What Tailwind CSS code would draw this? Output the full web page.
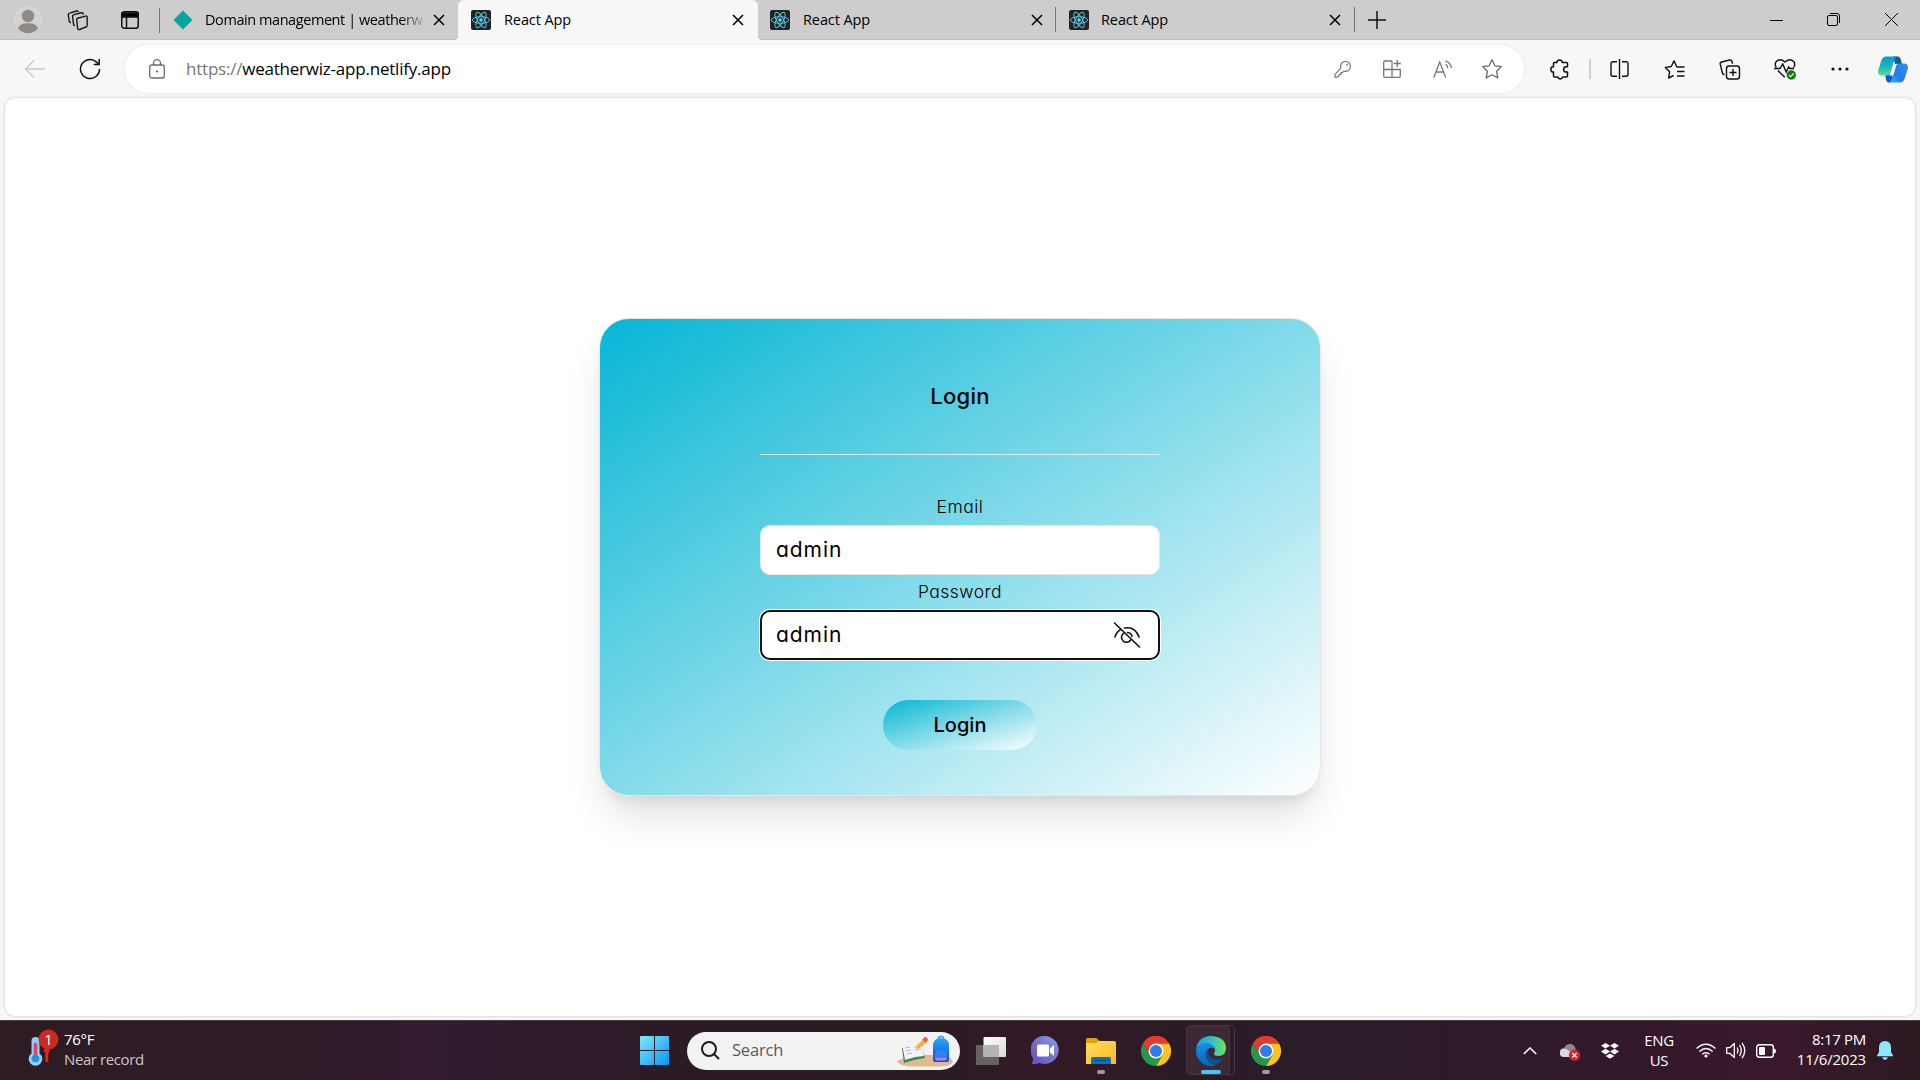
<!DOCTYPE html>
<html lang="en">
<head>
<meta charset="utf-8">
<title>React App</title>
<script src="https://cdn.jsdelivr.net/npm/@tailwindcss/browser@4"></script>
</head>
<body class="w-[1920px] h-[1080px] overflow-hidden flex flex-col bg-[#f7f7f7] text-black font-['Open_Sans','Noto_Sans',sans-serif]">

<svg class="hidden">
  <defs>
    <symbol id="x" viewBox="0 0 12 12"><path d="M1 1l10 10M11 1L1 11" stroke="currentColor" stroke-width="1.5" fill="none"/></symbol>
    <symbol id="react" viewBox="0 0 20 20">
      <rect width="20" height="20" rx="2" fill="#222"/>
      <g fill="none" stroke="#58c4dc" stroke-width="1">
        <ellipse cx="10" cy="10" rx="8.6" ry="3.3"/>
        <ellipse cx="10" cy="10" rx="8.6" ry="3.3" transform="rotate(60 10 10)"/>
        <ellipse cx="10" cy="10" rx="8.6" ry="3.3" transform="rotate(120 10 10)"/>
      </g>
      <circle cx="10" cy="10" r="1.8" fill="#61dafb"/>
    </symbol>
    <symbol id="chrome" viewBox="0 0 48 48">
      <path d="M24 24L3.2 12A24 24 0 0 1 44.8 12z" fill="#e33b2e"/>
      <path d="M44.8 12A24 24 0 0 1 24 48L34.4 30 24 12z" fill="#fcc31e"/>
      <path d="M3.2 12A24 24 0 0 0 24 48L34.4 30H13.6z" fill="#279847"/>
      <path d="M24 12h20.8A24 24 0 0 0 3.2 12L13.6 30z" fill="#e33b2e"/>
      <circle cx="24" cy="24" r="12" fill="#fff"/>
      <circle cx="24" cy="24" r="9.6" fill="#2f7bea"/>
    </symbol>
  </defs>
</svg>

<!-- Tab strip -->
<header class="h-[39px] shrink-0 flex bg-[#cdcdcd]">
  <div class="w-[160px] pl-[14px] flex items-center border-r border-transparent">
    <svg class="size-7 mt-px" viewBox="0 0 28 28"><circle cx="14" cy="14" r="13.5" fill="#d4d1ce" stroke="#dedbd7"/><circle cx="14" cy="10" r="6.2" fill="#8f8a87"/><path d="M4 22.5c1.500-4.500 5.500-5.300 10-5.300s8.500.8 10 5.300A13 13 0 0 1 4 22.500z" fill="#8f8a87"/></svg>
    <svg class="ml-[24px] w-[24px] h-[22px]" viewBox="0 0 24 22" fill="none" stroke="#1a1a1a" stroke-width="1.4" stroke-linejoin="round"><path d="M11.500 9.200l8.200-2.100q1.500-.3 1.500 1.200v8q0 1.300-1.200 1.700l-6.500 2.500q-1.700.5-1.900-1.100l-.8-8.200q-.1-1.600.7-2z"/><path d="M9 16.500q-1.300.2-1.500-1.300l-.9-7.500q-.1-1.700 1.300-2.100l7.500-1.900q1.500-.3 1.700 1v1"/><path d="M5 13.500q-1.500.2-1.700-1.200l-1-6q-.2-1.800 1.300-2.200L10.500 2q1.600-.4 1.900 1"/></svg>
    <svg class="ml-[30px] size-[20px]" viewBox="0 0 20 20" fill="none" stroke="#111" stroke-width="1.5"><rect x="1.800" y="1.800" width="16.400" height="16.400" rx="2.500"/><path d="M2 3h16v4H2z" fill="#000"/><path d="M6.500 7v11"/></svg>
  </div>
  <div class="w-[298px] pl-[13px] flex items-center relative">
    <i class="absolute left-[-1px] top-2 w-px h-[25px] bg-[#777]"></i>
    <svg class="size-5" viewBox="0 0 20 20"><path d="M10 0.500L19.500 10 10 19.500.5 10z" fill="#05a5a0"/></svg>
    <span class="ml-3 w-[219px] whitespace-nowrap text-[14.5px] tracking-[-0.43px] bg-[linear-gradient(90deg,#000_192px,#000000_195px,#00000022_219px)] bg-clip-text text-transparent">Domain management | weatherw</span>
    <svg class="ml-[9px] size-3 mt-px"><use href="#x"/></svg>
  </div>
  <div class="w-[300px] pl-[13px] flex items-center rounded-t-[6px] bg-[#f7f7f7]">
    <svg class="size-5"><use href="#react"/></svg>
    <span class="ml-[13px] w-[228px] text-[14.5px] tracking-[-0.1px]">React App</span>
    <svg class="size-3 mt-px"><use href="#x"/></svg>
  </div>
  <div class="w-[297px] pl-3 flex items-center">
    <svg class="size-5"><use href="#react"/></svg>
    <span class="ml-[13px] w-[228px] text-[14.5px] tracking-[-0.1px]">React App</span>
    <svg class="size-3 mt-px"><use href="#x"/></svg>
  </div>
  <div class="w-[299px] flex items-center">
    <i class="w-px h-[25px] bg-[#777]"></i>
    <svg class="size-5 ml-[13px]"><use href="#react"/></svg>
    <span class="ml-[12px] w-[228px] text-[14.5px] tracking-[-0.1px]">React App</span>
    <svg class="size-3 mt-px"><use href="#x"/></svg>
  </div>
  <div class="flex items-center">
    <i class="w-px h-[25px] bg-[#777]"></i>
    <svg class="ml-[13px] size-[18px]" viewBox="0 0 18 18" stroke="#111" stroke-width="1.500"><path d="M9 0v18M0 9h18"/></svg>
  </div>
  <div class="ml-auto w-[173px] flex items-center pl-[23px]">
    <svg class="w-[13px] h-3" viewBox="0 0 13 12"><path d="M0 6.500h13" stroke="#000"/></svg>
    <svg class="ml-[44px] size-[13px]" viewBox="0 0 13 13" fill="none" stroke="#000"><rect x=".5" y="2.500" width="10" height="10" rx="1.500"/><path d="M3 .5h7a2.500 2.500 0 0 1 2.500 2.500v7"/></svg>
    <svg class="ml-[45px] size-[13px]" viewBox="0 0 13 13" stroke="#000"><path d="M0 0l13 13M13 0L0 13"/></svg>
  </div>
</header>
<!-- Strip edge, open under the active tab -->
<div class="h-px shrink-0 flex"><i class="w-[456px] bg-[#bdbdbd]"></i><i class="w-[304px]"></i><i class="grow bg-[#bdbdbd]"></i></div>

<!-- Toolbar -->
<nav class="h-[57px] shrink-0 flex items-center pl-[24px] pt-px">
  <svg class="size-[22px]" viewBox="0 0 22 22" fill="none" stroke="#c9c9c9" stroke-width="1.300"><path d="M21 11H2M10 2.500L1.500 11l8.500 8.500"/></svg>
  <svg class="ml-[33px] size-[22px]" viewBox="0 0 22 22" fill="none" stroke="#111" stroke-width="1.500"><path d="M20.500 11a9.500 9.500 0 1 1-3-6.900l2.500 2.200"/><path d="M20.200 1v5.500h-5.500"/></svg>
  <div class="ml-[24px] w-[1399px] h-[48px] rounded-full bg-white flex items-center shadow-[0_0_4px_rgba(0,0,0,.06)]">
    <svg class="ml-[24px] w-4 h-5" viewBox="0 0 16 20" fill="none" stroke="#6b6b6b" stroke-width="1.300"><rect x=".7" y="6" width="14.600" height="13" rx="2"/><path d="M4.500 6V4.200a3.500 3.500 0 0 1 7 0V6"/><circle cx="8" cy="12.500" r="1" fill="#555" stroke="none"/></svg>
    <span class="ml-[21px] w-[1148px] text-[17px] tracking-[-0.22px]"><span class="text-[#767676]">https://</span>weatherwiz-app.netlify.app</span>
    <svg class="size-[18px]" viewBox="0 0 18 18" fill="none" stroke="#767676" stroke-width="1.200"><path d="M6.800 8.200A5 5 0 1 1 10 11.200l-1.500 1.300H7v2H5l-.3 2-1.200.7H1v-2.800z"/><circle cx="13" cy="5" r=".9" fill="#767676" stroke="none"/></svg>
    <svg class="ml-[31px] size-[18px]" viewBox="0 0 18 18" fill="none" stroke="#767676" stroke-width="1.300"><path d="M9 1H2a1.300 1.300 0 0 0-1.300 1.300V16A1.300 1.300 0 0 0 2 17.300h14a1.300 1.300 0 0 0 1.300-1.300v-6.500H.7M9 1v16.300M14.300 0v7M10.800 3.500h7"/></svg>
    <svg class="ml-[32px] w-[20px] h-[18px]" viewBox="0 0 20 18" fill="none" stroke="#767676" stroke-width="1.300"><path d="M.8 17.500L6.700 2l6 15.500M3 12h7.500M12.500 4q2 1.200 2.200 4M12.500.8q5.200 2 6 7.200" /></svg>
    <svg class="ml-[28px] size-[22px]" viewBox="0 0 22 22" fill="none" stroke="#6b6b6b" stroke-width="1.300" stroke-linejoin="round"><path d="M11 1.800l2.900 6 6.400.9-4.700 4.600 1.200 6.600L11 16.800l-5.800 3.100 1.200-6.600L1.700 8.700l6.400-.9z"/></svg>
  </div>
  <svg class="ml-[26px] w-[19px] h-[21px]" viewBox="0 0 19 21" fill="none" stroke="#111" stroke-width="1.500" stroke-linejoin="round"><path d="M4 3.500h3a2.600 2.600 0 0 1 5.200 0h4.300q1 0 1 1v3.200h-1.200a2.700 2.700 0 0 0 0 5.400h1.200v3.900q0 1-1 1h-3.800a2.600 2.600 0 0 1-5 0H4.500q-1 0-1-1v-3.900a2.700 2.700 0 0 1 0-5.400V4z"/></svg>
  <i class="ml-[20px] w-[2px] h-5 bg-[#cfcfcf]"></i>
  <svg class="ml-[19px] w-[19px] h-5" viewBox="0 0 19 20" fill="none" stroke="#111" stroke-width="1.400"><path d="M7 2.700H3a2 2 0 0 0-2 2v10.600a2 2 0 0 0 2 2h4M12 2.700h4a2 2 0 0 1 2 2v10.600a2 2 0 0 1-2 2h-4M9.500 0v20"/></svg>
  <svg class="ml-[35px] size-[21px]" viewBox="0 0 21 21" fill="none" stroke="#111" stroke-width="1.400" stroke-linejoin="round"><path d="M14 8l-1.300-.2L10 1.800 7.300 7.500l-6 .9 4.300 4.400L4.600 19l5-2.500M13 8h7.500M13 12.500h7.500M13 17h7.500"/></svg>
  <svg class="ml-[34px] w-[22px] h-[21px]" viewBox="0 0 22 21" fill="none" stroke="#111" stroke-width="1.400"><rect x="7.500" y="7" width="13" height="13" rx="2.500"/><path d="M14 10v7M10.500 13.500h7M5.500 15.800Q3.800 15.500 3.300 13.500L1.200 5.200Q.8 3.500 2.600 3L10.500 1q2-.4 2.500 1.500l.6 2.300"/></svg>
  <svg class="ml-[33px] w-[22px] h-[22px]" viewBox="0 0 22 22" fill="none" stroke="#111" stroke-width="1.400"><path d="M2.300 9.500Q.2 6 2.300 3.500q3.800-3.700 8.700.5 4.900-4.200 8.700-.5Q21.800 6 19.700 9.500M3.800 12.500l7 6.800M0 10.500h6l2.800-4.500 3.400 8 2.500-5 1.300 1.500h4"/><circle cx="17.300" cy="17" r="4.700" fill="#107c10" stroke="none"/><path d="M15 17.200l1.600 1.500 3-3.200" stroke="#fff" stroke-width="1.200"/></svg>
  <svg class="ml-[35px] w-[18px] h-4" viewBox="0 0 18 4" fill="#111"><circle cx="2" cy="2" r="1.600"/><circle cx="9" cy="2" r="1.600"/><circle cx="16" cy="2" r="1.600"/></svg>
  <svg class="ml-[29px] w-[30px] h-[27px]" viewBox="0 0 30 27">
    <defs>
      <linearGradient id="cp1" x2="0" y2="1"><stop stop-color="#0a9bd0"/><stop offset=".5" stop-color="#15b4c0"/><stop offset="1" stop-color="#5fe08c"/></linearGradient>
      <linearGradient id="cp2" x1="1" x2="0" y2="1"><stop stop-color="#3c8cf0"/><stop offset=".6" stop-color="#1e7fe8"/><stop offset="1" stop-color="#20c5f5"/></linearGradient>
    </defs>
    <path d="M15 .5h4.500q2.500 0 3.300 3L24 8h-7z" fill="#0a5f93"/>
    <path d="M7 18h6.500l2 5-2.500 3.500h-2q-2.300 0-3-3z" fill="#1c4fd8"/>
    <path d="M8.500.5h11q-2.500.5-3.500 4l-3 11q-1 4-4.500 4H4Q-.8 19.500.3 14L3.500 4Q4.800.5 8.500.5z" fill="url(#cp1)"/>
    <path d="M21.500 26.500h-11q2.500-.5 3.500-4l3-11q1-4 4.500-4H26q4.800 0 3.700 5.500L26.500 23q-1.300 3.500-5 3.500z" fill="url(#cp2)"/>
    <path d="M16.500 9.500q.7-2 2.700-2-1 1.300-1.500 3.500l-1.800 6.500q-.7 2-2.700 2H11q1.500-.8 2.300-3z" fill="#fff"/>
  </svg>
</nav>

<!-- Page -->
<main class="mx-[5px] mt-px mb-1 h-[918px] shrink-0 rounded-[10px] bg-white shadow-[0_0_3px_rgba(0,0,0,.22)] pt-[220px] font-['Inter','Open_Sans',sans-serif] [font-feature-settings:'cv11']">
  <form class="mx-auto w-[722px] h-[478px] rounded-[30px] border border-gray-200 bg-[linear-gradient(to_bottom_right,#06b6d4,#ffffff)] shadow-[0_25px_40px_-6px_rgba(0,0,0,.12),0_10px_13px_-7px_rgba(0,0,0,.1)] flex flex-col items-center">
    <h1 class="mt-[61px] h-[32px] leading-[32px] text-[22px] font-medium tracking-[0.25px]">Login</h1>
    <hr class="mt-[42px] w-[400px] border-t border-gray-200">
    <label class="mt-[38px] h-7 leading-7 text-[17.5px] font-light tracking-[0.5px]">Email</label>
    <div class="mt-[4px] w-[400px] h-[50px] shrink-0 rounded-[10px] border border-gray-200 bg-white px-[15px] flex items-center text-[21px] tracking-[0.95px]">admin</div>
    <label class="mt-[3px] h-7 leading-7 text-[17.5px] font-light tracking-[0.45px]">Password</label>
    <div class="mt-[4px] w-[400px] h-[50px] shrink-0 rounded-[10px] border-2 border-[#101010] bg-white ring-1 ring-white pl-[14px] pr-[17px] flex items-center justify-between text-[21px] tracking-[0.95px]">admin
      <svg class="w-[28px] h-[26px]" viewBox="0 0 28 26" fill="none" stroke="#111" stroke-width="1.600" stroke-linecap="round"><path d="M1.500 1l25 24M2 15Q3.800 9.500 8 7.300M11.500 6q10.500-2 14.500 9"/><path d="M10.500 11.300a5 5 0 1 0 7.200 6.700M14.500 10.500q4 .4 4.500 4" /></svg>
    </div>
    <button type="button" class="mt-10 w-[154px] h-[50px] shrink-0 rounded-full bg-[linear-gradient(to_bottom_right,#06b6d4,#ffffff)] text-[20px] font-medium">Login</button>
  </form>
</main>

<!-- Taskbar -->
<footer class="h-[60px] shrink-0 flex items-center border-t border-[#4a4044] bg-[linear-gradient(90deg,#2d1c24_0px,#2f1a26_280px,#331a30_420px,#2c1b27_640px,#2b1b25_950px,#331925_1060px,#2b1b26_1180px,#2c1a2a_1450px,#33192a_1620px,#3a182c_1780px,#2b1a22_1920px)] text-white text-[15px]">
  <div class="w-[640px] pl-[28px] flex items-center pb-1">
    <svg class="w-[32px] h-[38px] -mt-px" viewBox="0 0 32 38">
      <path d="M3.500 12a4 4 0 0 1 8 0v12.500a6.800 6.800 0 1 1-8 0z" fill="#93cdf8"/>
      <path d="M5.700 17q0-3.500 1.800-3.500t1.800 3.500v10H5.700z" fill="#d9456d"/><circle cx="7.500" cy="29.500" r="3.800" fill="#1c92e0"/>
      <path d="M18.800 33V22M16.500 23l2.300-3 2.300 3" stroke="#f31b12" stroke-width="3" fill="none"/>
      <circle cx="20.500" cy="10.500" r="10" fill="#c92b1e"/>
      <text x="20.500" y="15.500" text-anchor="middle" font-size="14" fill="#fff">1</text>
    </svg>
    <div class="ml-1 leading-5"><div class="tracking-[-0.3px]">76°F</div><div class="text-[#cdc6c9] tracking-[-0.4px]">Near record</div></div>
  </div>
  <svg class="size-[29px]" viewBox="0 0 29 29"><defs><linearGradient id="win" x2="1" y2="1"><stop stop-color="#7beafc"/><stop offset="1" stop-color="#0c93f7"/></linearGradient></defs><path d="M0 1q0-1 1-1h13v14H0zM15 0h13q1 0 1 1v13H15zM0 15h14v14H1q-1 0-1-1zM15 15h14v13q0 1-1 1H15z" fill="url(#win)"/></svg>
  <div class="ml-[18px] w-[273px] h-[38px] rounded-full bg-[#f2f2f2] flex items-center pl-[14px] pr-[6px] overflow-hidden">
    <svg class="size-[19px]" viewBox="0 0 19 19" fill="none" stroke="#1c1c1c" stroke-width="2"><circle cx="8" cy="8" r="7"/><path d="M13 13l5 5"/></svg>
    <span class="ml-[12px] text-[16.5px] tracking-[-0.2px] text-[#5a5a5a]">Search</span>
    <svg class="ml-auto w-[58px] h-[34px]" viewBox="0 0 58 34">
      <defs><linearGradient id="bag" x2="0" y2="1"><stop stop-color="#29a8f5"/><stop offset="1" stop-color="#0c4fd0"/></linearGradient></defs>
      <path d="M1 27Q14 20 28 21h20q7 2 9 7-3 4.500-14 4.500H14Q4 32 1 27z" fill="#e3b98c"/>
      <path d="M6 14l10-2 9-1 4 13-11 2-10 3z" fill="#2f8f4e"/><path d="M6.500 12l8.500-2 4 13-10 3zM15 10l10-1 3 13-9 1z" fill="#f6f3fa"/><path d="M9 14l5-1M10 17l5-1M11 20l5-1M18 13l6-1M19 16l6-1" stroke="#b9adcf"/>
      <path d="M20 15l1-4 7-6 3 3-7 6z" fill="#f7b32b"/><path d="M26 6l2.500-3q3-.5 3.500 3l-2 2.500z" fill="#ee5a4f"/>
      <path d="M42 4.500q3-4.500 6 0" stroke="#2a8ce8" stroke-width="1.500" fill="none"/><path d="M37 12q0-8 8-8t8 8v14q0 2-2 2H39q-2 0-2-2z" fill="url(#bag)"/><path d="M39 22q0-6 6-6t6 6v3H39z" fill="#2f83f3"/><path d="M39 24h12l-1 2.500H40z" fill="#b57df0"/>
    </svg>
  </div>
  <div class="ml-[3px] h-full flex">
    <div class="w-[55px] flex items-center justify-center"><svg class="w-[30px] h-[28px]" viewBox="0 0 30 28"><defs><linearGradient id="tv" x2="1" y2="1"><stop stop-color="#fff"/><stop offset="1" stop-color="#d9d9d9"/></linearGradient></defs><rect x="0" y="8" width="23" height="20" rx="1" fill="#676365"/><rect x="7.500" width="22.500" height="20" rx="1" fill="url(#tv)"/><path d="M7.500 8H23v12H7.500z" fill="#b5b3b4"/></svg></div>
    <div class="w-[55px] flex items-center justify-center"><svg class="size-[29px]" viewBox="0 0 29 29"><defs><linearGradient id="ch" x1="1" x2="0" y2="1"><stop stop-color="#7ba4f0"/><stop offset=".5" stop-color="#7a70c4"/><stop offset="1" stop-color="#5a50cf"/></linearGradient></defs><path d="M14.500 0a14 14 0 1 1-6 27q-4 1.500-8 1.300 1.700-3 1.500-6.300A14 14 0 0 1 14.500 0z" fill="url(#ch)"/><rect x="6" y="8.500" width="12" height="12" rx="1.500" fill="#fff"/><path d="M19 12.500l4-3.500v11l-4-3.500z" fill="#fff"/></svg></div>
    <div class="w-[55px] relative flex items-center justify-center"><svg class="w-[30px] h-[28px]" viewBox="0 0 30 28"><defs><linearGradient id="fo" x2="1" y2="1"><stop stop-color="#ffdc60"/><stop offset="1" stop-color="#fbb91d"/></linearGradient></defs><path d="M0 2.500Q0 1 1.500 1h8q1 0 2 1l2 2v5H0z" fill="#dfa00a"/><path d="M0 6h10l3-2h15q2 0 2 2v21H0z" fill="url(#fo)"/><path d="M5 27v-5q0-2 2-2h16q2 0 2 2v5z" fill="#0c6fc4"/><path d="M8.500 23.500h13" stroke="#084c8a"/></svg><i class="absolute bottom-[6px] left-1/2 -ml-1 w-2 h-1 rounded-full bg-[#a19a9e]"></i></div>
    <div class="w-[55px] flex items-center justify-center"><svg class="size-[30px]"><use href="#chrome"/></svg></div>
    <div class="w-[55px] relative flex items-center">
      <i class="absolute left-[8px] top-[4px] w-[44px] h-[50px] rounded-[5px] border border-[#473843]"></i>
      <i class="absolute left-[3px] top-[4px] w-[44px] h-[50px] rounded-[5px] bg-[#3b2a35] border border-[#473843]"></i>
      <svg class="relative ml-[13px] size-[30px]" viewBox="0 0 30 30"><defs><linearGradient id="e1" x2="1"><stop stop-color="#1f9fe0"/><stop offset=".55" stop-color="#35c3c8"/><stop offset="1" stop-color="#6fe34d"/></linearGradient><linearGradient id="e2" x2="0" y2="1"><stop stop-color="#1b8fe0"/><stop offset="1" stop-color="#0b63b8"/></linearGradient></defs>
        <path d="M0 14Q1.500 0 15.500 0 30 1 30 12.500 29.500 20 22.500 20q-5 0-4.500-2.500Q20 14.500 18 11 14 6.500 7 8 2 9.500 0 14z" fill="url(#e1)"/>
        <path d="M0 14.500Q2.500 7 10 7q7 0 9 5.500-5-2-8 1.500-3.500 5 1 10.500 3 4 8.500 4.500A15 15 0 0 1 0 14.500z" fill="url(#e2)"/>
        <path d="M11.500 13.500q-4 6 1.500 12 6 6.500 13-1.500 1.500-2-.5-1.500-6.500 2.500-11-1.500-3.500-3.500-1.500-8z" fill="#114f94"/></svg>
      <i class="absolute bottom-[6px] left-[18px] w-5 h-1 rounded-full bg-[#4cc2ff]"></i>
    </div>
    <div class="w-[55px] relative flex items-center justify-center"><svg class="size-[30px]"><use href="#chrome"/></svg><i class="absolute bottom-[6px] left-1/2 -ml-1 w-2 h-1 rounded-full bg-[#a19a9e]"></i></div>
  </div>
  <div class="ml-auto h-full flex items-center pr-[27px]">
    <svg class="w-[14px] h-[8px]" viewBox="0 0 14 8" fill="none" stroke="#fff" stroke-width="1.600"><path d="M.8 7L7 1l6.200 6"/></svg>
    <svg class="ml-[23px] w-[20px] h-[17px] mt-1" viewBox="0 0 20 17"><path d="M4 12a4 4 0 0 1 0-8Q6 0 10 0t5.500 4.500L17 12z" fill="#8f8a8d"/><path d="M4 13a4 4 0 0 1-.5-8q3-1 5 1.500l6 4.500v2z" fill="#d9d9d9"/><circle cx="14.500" cy="11.200" r="5.600" fill="#d8232f"/><path d="M12.300 9l4.400 4.400M16.700 9l-4.400 4.400" stroke="#fff" stroke-width="1.400"/></svg>
    <svg class="ml-[21px] w-[18px] h-[16px]" viewBox="0 0 18 16" fill="#fff"><path d="M4.500 0L9 2.800 4.500 5.600 0 2.800zM13.500 0L18 2.800l-4.500 2.800L9 2.800zM4.500 5.800L9 8.600l-4.500 2.800L0 8.600zM13.500 5.800L18 8.600l-4.500 2.800L9 8.600zM9 10.400l4.300 2.700L9 15.800l-4.300-2.700z"/></svg>
    <div class="ml-[25px] w-[30px] -mt-px text-center leading-5 tracking-[-0.3px]">ENG<br>US</div>
    <svg class="ml-[22px] w-[20px] h-[15px]" viewBox="0 0 20 15" fill="none" stroke="#fff" stroke-width="1.400"><path d="M.6 5.500q9.400-8.500 18.800 0M3.400 8.500q6.600-6 13.200 0M6.300 11.300q3.700-3.300 7.400 0"/><circle cx="10" cy="13" r="1.600" fill="#fff" stroke="none"/></svg>
    <svg class="ml-[10px] w-[20px] h-[17px]" viewBox="0 0 20 17" fill="none" stroke="#fff" stroke-width="1.300" stroke-linejoin="round"><path d="M.7 5.700h3L8.300 1.500v14L3.700 11.300h-3zM11 5.500q2 3 0 6M13.500 3q3.600 5.500 0 11M16 .8q5.500 7.700 0 15.400"/></svg>
    <svg class="ml-[10px] w-[20px] h-[14px]" viewBox="0 0 20 14"><rect x=".7" y=".7" width="16.600" height="12.600" rx="2.500" fill="none" stroke="#fff" stroke-width="1.400"/><rect x="3" y="3" width="6" height="8" rx="1" fill="#fff"/><path d="M18 4.500q2 0 2 2.500t-2 2.500z" fill="#fff"/></svg>
    <div class="ml-[16px] w-[74px] -mt-1 text-right leading-5"><div class="tracking-[-0.3px]">8:17 PM</div><div class="tracking-[-0.2px]">11/6/2023</div></div>
    <svg class="ml-[11px] w-[16px] h-[19px]" viewBox="0 0 16 19" fill="#8de6fd"><path d="M8 0q6 .3 6 6.500V11l2 3.500v.7H0v-.7L2 11V6.500Q2 .3 8 0zM5.200 16.300h5.600Q10.300 19 8 19t-2.800-2.700z"/></svg>
  </div>
</footer>
</body>
</html>
